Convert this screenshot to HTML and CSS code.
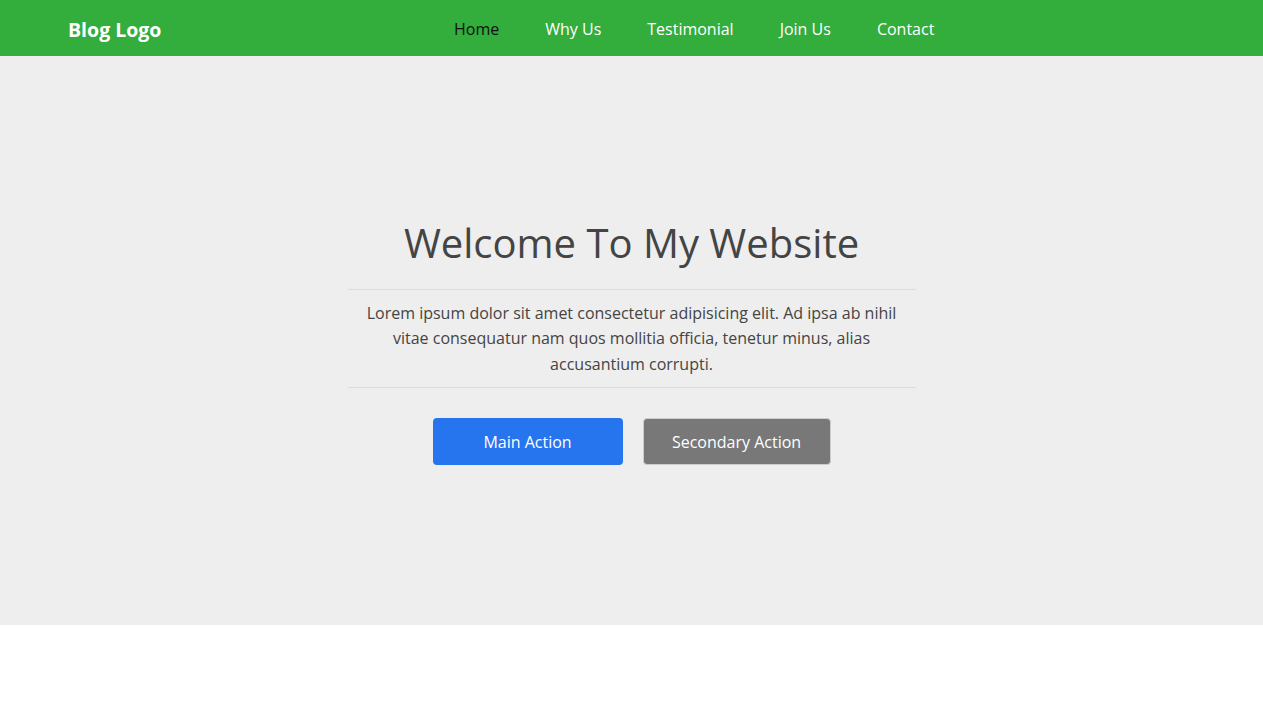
FILE: index.html
```html
<!DOCTYPE html>
<html lang="en">
<head>
<meta charset="utf-8">
<title>Blog</title>
<link rel="stylesheet" href="styles.css">
</head>
<body>
<header class="navbar">
  <div class="logo">Blog Logo</div>
  <nav class="links">
    <a class="link active" href="#">Home</a>
    <a class="link" href="#">Why Us</a>
    <a class="link" href="#">Testimonial</a>
    <a class="link" href="#">Join Us</a>
    <a class="link" href="#">Contact</a>
  </nav>
</header>
<section class="hero">
  <div class="hero-content">
    <h1 class="title">Welcome To My Website</h1>
    <p class="lead">Lorem ipsum dolor sit amet consectetur adipisicing elit. Ad ipsa ab nihil vitae consequatur nam quos mollitia officia, tenetur minus, alias accusantium corrupti.</p>
    <div class="actions">
      <a class="btn btn-main" href="#">Main Action</a>
      <a class="btn btn-secondary" href="#">Secondary Action</a>
    </div>
  </div>
</section>
</body>
</html>
```
FILE: styles.css
```css
* { box-sizing: border-box; }
body {
  margin: 0;
  font-family: "Open Sans", "Noto Sans", sans-serif;
  background: #fff;
}
.navbar {
  height: 56px;
  background: #33ad3c;
  display: flex;
  align-items: center;
  padding-left: 68px;
  padding-top: 2px;
}
.logo {
  color: #fff;
  font-weight: 700;
  font-size: 19.5px;
  width: 386px;
}
.links {
  display: flex;
  gap: 46px;
}
.link {
  color: #fff;
  text-decoration: none;
  font-size: 16px;
}
.link.active { color: #111; }
.hero {
  height: 569px;
  background: #eeeeee;
  display: flex;
  align-items: center;
  justify-content: center;
  padding-top: 3px;
}
.hero-content {
  width: 568px;
  text-align: center;
}
.title {
  margin: 0;
  font-weight: 400;
  font-size: 40px;
  color: #444;
  line-height: 48px;
  padding-bottom: 22px;
  border-bottom: 1px solid #dddddd;
}
.lead {
  margin: 0;
  padding: 11px 0 10px;
  font-size: 16px;
  line-height: 25.5px;
  color: #444;
  border-bottom: 1px solid #dddddd;
}
.actions {
  display: flex;
  justify-content: center;
  gap: 20px;
  margin-top: 30px;
}
.btn {
  display: flex;
  align-items: center;
  justify-content: center;
  height: 47px;
  border-radius: 4px;
  color: #fff;
  text-decoration: none;
  font-size: 16px;
}
.btn-main {
  width: 190px;
  background: #2775ee;
}
.btn-secondary {
  width: 188px;
  background: #787878;
  border: 1px solid #cccccc;
}
```
